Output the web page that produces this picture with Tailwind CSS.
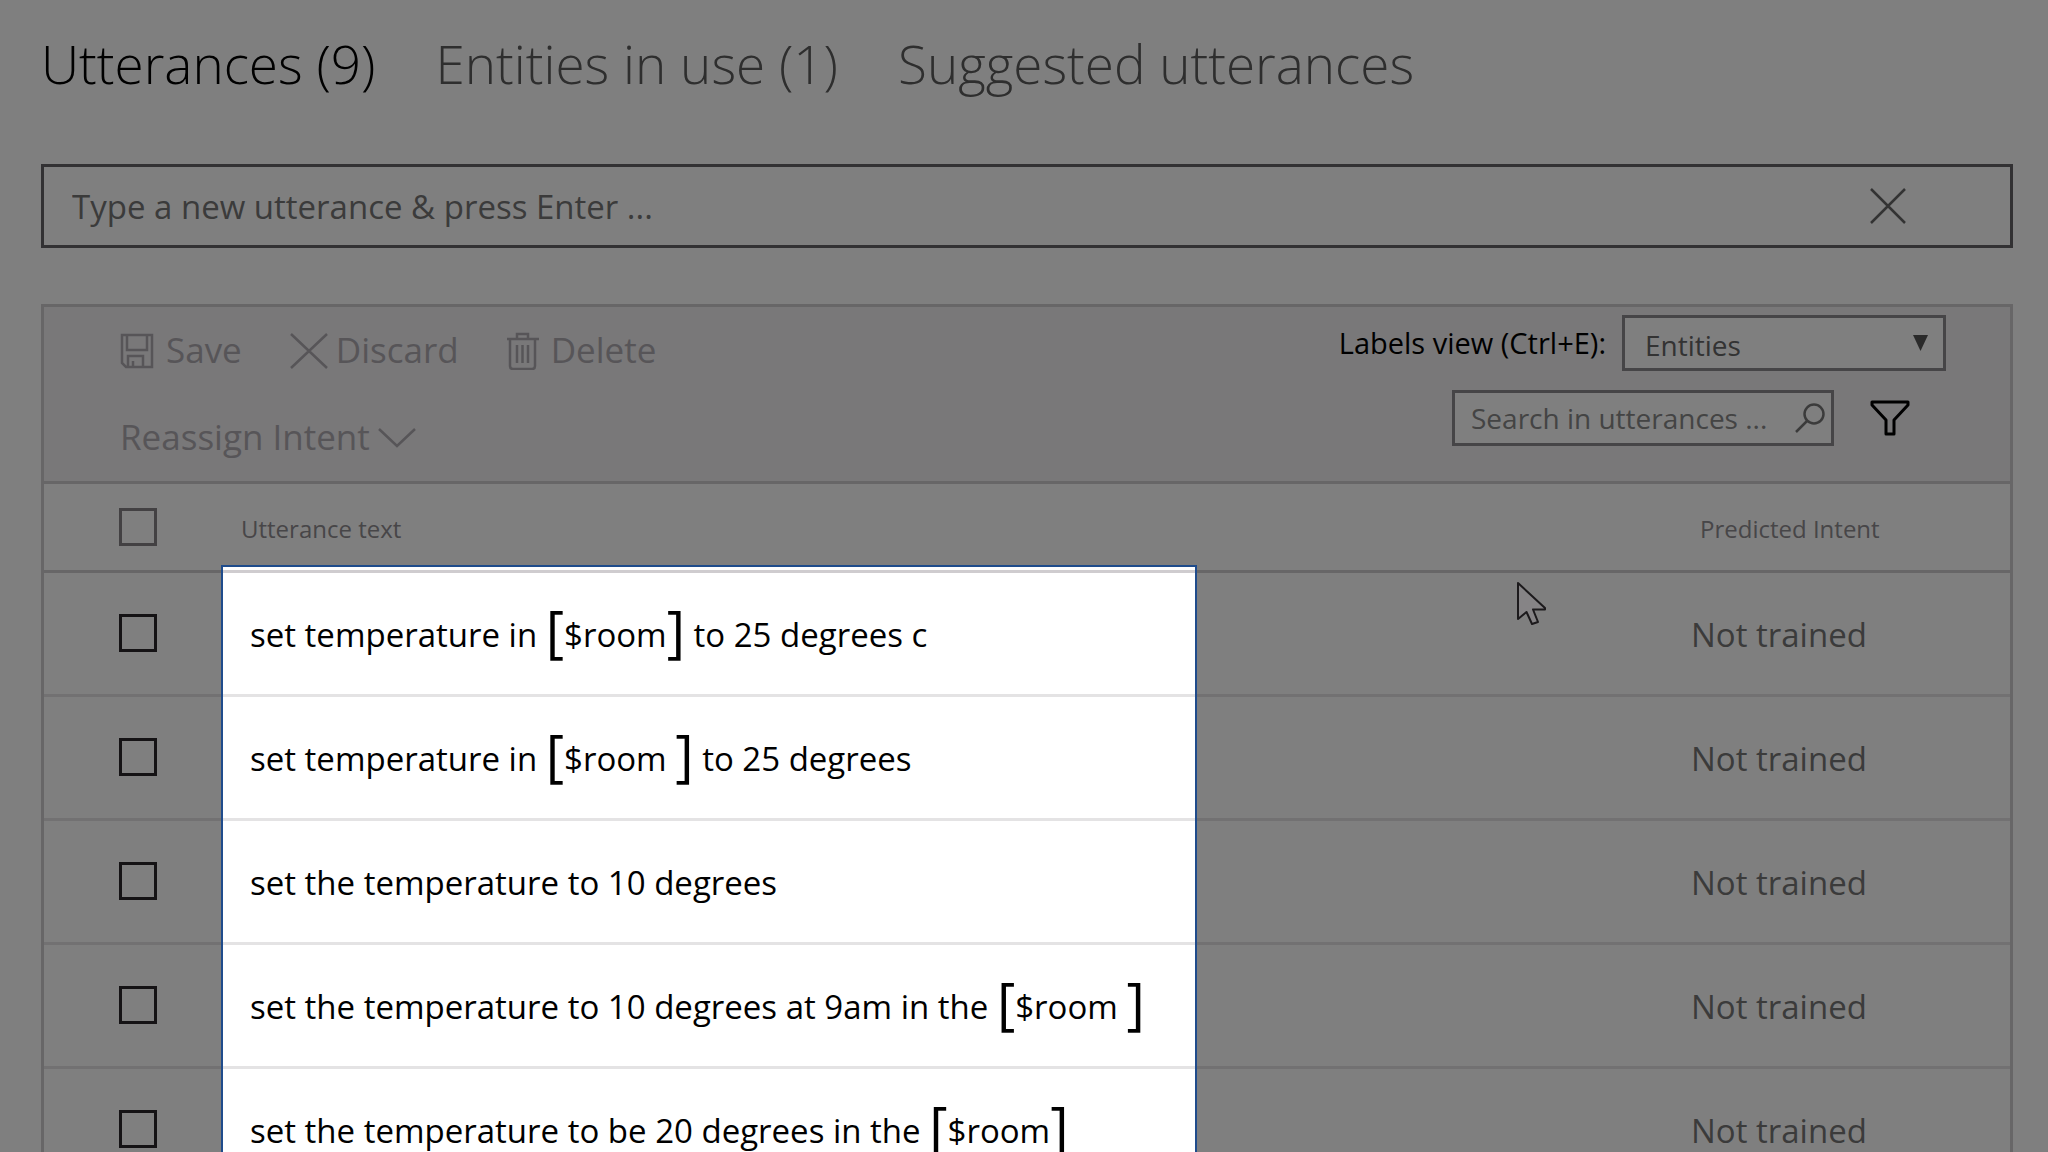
<!DOCTYPE html>
<html lang="en">
<head>
  <meta charset="UTF-8" />
  <meta name="viewport" content="width=device-width, initial-scale=1" />
  <title>Utterances</title>
  <script src="https://cdn.jsdelivr.net/npm/@tailwindcss/browser@4"></script>
</head>
<body class="bg-white font-['Open_Sans','Noto_Sans',sans-serif] text-black">

  <main class="relative h-screen overflow-hidden pl-[41px] pr-[35px] pt-6">

    <!-- Tabs -->
    <nav class="flex gap-15 text-[53px] font-light leading-[80px] text-[#5c5c5c]">
      <a href="#utterances" class="text-black">Utterances (9)</a>
      <a href="#entities">Entities in use (1)</a>
      <a href="#suggested">Suggested utterances</a>
    </nav>

    <!-- New utterance -->
    <div class="mt-15 flex h-[84px] items-center border-3 border-[#646266] pl-7 pr-26">
      <input type="text" aria-label="New utterance" placeholder="Type a new utterance &amp; press Enter ..." class="h-full flex-1 text-[33px] placeholder:text-[#777] outline-none" />
      <button type="button" aria-label="Clear">
        <svg class="size-9" viewBox="0 0 36 36" fill="none" stroke="#666" stroke-width="2.5"><path d="M1 1 35 35M35 1 1 35" /></svg>
      </button>
    </div>

    <section class="relative mt-14 border-x-3 border-t-3 border-[#cfcccf]">

      <!-- Toolbar -->
      <div class="flex justify-between border-b-3 border-[#cfcccf] bg-[#f2f0f3] pl-[76px] pr-16">
        <div class="text-[35px] text-[#aeabb0]">
          <div class="flex h-[87px] items-center gap-12">
            <button type="button" class="flex items-center gap-3">
              <svg class="h-9 w-[34px]" viewBox="0 0 34 36" fill="none" stroke="currentColor" stroke-width="2.5">
                <path d="M2 2H32V34H6L2 30ZM7 2V17H27V2M8 34V23H23V34M13 28V34" />
              </svg>
              Save
            </button>
            <button type="button" class="flex items-center gap-2">
              <svg class="h-9 w-[38px]" viewBox="0 0 38 36" fill="none" stroke="currentColor" stroke-width="2.5"><path d="M1 1 37 35M37 1 1 35" /></svg>
              Discard
            </button>
            <button type="button" class="flex items-center gap-3">
              <svg class="h-[38px] w-8" viewBox="0 0 32 38" fill="none" stroke="currentColor" stroke-width="2.5">
                <path d="M0 7H32M10 7V2H21V7M3 7V34Q3 37 6 37H25Q28 37 28 34V7M10 13V31M15.5 13V31M21 13V31" />
              </svg>
              Delete
            </button>
          </div>
          <button type="button" class="flex h-[87px] items-center gap-2">
            Reassign Intent
            <svg class="h-5 w-[38px]" viewBox="0 0 38 20" fill="none" stroke="currentColor" stroke-width="2.5"><path d="M1 1 19 18 37 1" /></svg>
          </button>
        </div>

        <div class="flex flex-col items-end gap-[19px] pt-2 text-[28px]">
          <div class="flex items-center gap-4">
            <label for="labelsView" class="text-[29px]">Labels view (Ctrl+E):</label>
            <div class="relative">
              <select id="labelsView" class="h-14 w-81 appearance-none border-3 border-[#8c8a8e] bg-white px-5 pt-1 text-[#666]">
                <option>Entities</option>
              </select>
              <svg class="pointer-events-none absolute right-[18px] top-5 h-4 w-[15px]" viewBox="0 0 15 16" fill="#555"><path d="M0 0H15L7.5 16Z" /></svg>
            </div>
          </div>
          <div class="mr-9 flex items-center gap-9">
            <div class="relative">
              <input type="text" aria-label="Search in utterances" placeholder="Search in utterances ..." class="h-14 w-[382px] border-3 border-[#8c8a8e] bg-white pl-4 pr-11 placeholder:text-[#888] outline-none" />
              <svg class="pointer-events-none absolute right-2 top-3 size-8" viewBox="0 0 32 32" fill="none" stroke="#777" stroke-width="2.5">
                <circle cx="20" cy="12" r="9.5" /><path d="M13 19 2 30" />
              </svg>
            </div>
            <button type="button" aria-label="Filter">
              <svg class="h-9 w-10" viewBox="0 0 40 36" fill="none" stroke="#000" stroke-width="3" stroke-linejoin="round">
                <path d="M2 2H38V5L24 20V34H16V20L2 5Z" />
              </svg>
            </button>
          </div>
        </div>
      </div>

      <!-- Utterances -->
      <table class="w-full text-left text-[33px]">
        <thead>
          <tr class="h-[87px] border-b-3 border-[#cfcccf] text-[24px] text-[#8f8c90]">
            <th class="w-[177px] pl-[75px]"><input type="checkbox" aria-label="Select all" class="block size-[38px] appearance-none border-3 border-[#868286]" /></th>
            <th class="pl-5 pt-1 font-normal">Utterance text</th>
            <th class="w-[360px] pl-[50px] pt-1 font-normal">Predicted Intent</th>
          </tr>
        </thead>
        <tbody>
          <tr class="h-[124px] border-b-3 border-[#e4e3e4]">
            <td class="pl-[75px]"><input type="checkbox" aria-label="Select utterance 1" class="block size-[38px] appearance-none border-3 border-[#2a262a]" /></td>
            <td class="pl-[29px] pt-1">set temperature in <span class="align-[-5px] text-[56px] leading-[0]">[</span>$room<span class="align-[-5px] text-[56px] leading-[0]">]</span> to 25 degrees c</td>
            <td class="pl-[41px] pt-1 text-[#777]">Not trained</td>
          </tr>
          <tr class="h-[124px] border-b-3 border-[#e4e3e4]">
            <td class="pl-[75px]"><input type="checkbox" aria-label="Select utterance 2" class="block size-[38px] appearance-none border-3 border-[#2a262a]" /></td>
            <td class="pl-[29px] pt-1">set temperature in <span class="align-[-5px] text-[56px] leading-[0]">[</span>$room <span class="align-[-5px] text-[56px] leading-[0]">]</span> to 25 degrees</td>
            <td class="pl-[41px] pt-1 text-[#777]">Not trained</td>
          </tr>
          <tr class="h-[124px] border-b-3 border-[#e4e3e4]">
            <td class="pl-[75px]"><input type="checkbox" aria-label="Select utterance 3" class="block size-[38px] appearance-none border-3 border-[#2a262a]" /></td>
            <td class="pl-[29px] pt-1">set the temperature to 10 degrees</td>
            <td class="pl-[41px] pt-1 text-[#777]">Not trained</td>
          </tr>
          <tr class="h-[124px] border-b-3 border-[#e4e3e4]">
            <td class="pl-[75px]"><input type="checkbox" aria-label="Select utterance 4" class="block size-[38px] appearance-none border-3 border-[#2a262a]" /></td>
            <td class="pl-[29px] pt-1">set the temperature to 10 degrees at 9am in the <span class="align-[-5px] text-[56px] leading-[0]">[</span>$room <span class="align-[-5px] text-[56px] leading-[0]">]</span></td>
            <td class="pl-[41px] pt-1 text-[#777]">Not trained</td>
          </tr>
          <tr class="h-[124px] border-b-3 border-[#e4e3e4]">
            <td class="pl-[75px]"><input type="checkbox" aria-label="Select utterance 5" class="block size-[38px] appearance-none border-3 border-[#2a262a]" /></td>
            <td class="pl-[29px] pt-1">set the temperature to be 20 degrees in the <span class="align-[-5px] text-[56px] leading-[0]">[</span>$room<span class="align-[-5px] text-[56px] leading-[0]">]</span></td>
            <td class="pl-[41px] pt-1 text-[#777]">Not trained</td>
          </tr>
        </tbody>
      </table>

      <!-- Spotlight: its shadow dims everything outside the box -->
      <div class="pointer-events-none absolute bottom-0 left-[177px] top-[258px] w-[976px] border-2 border-[#1f4c8c] shadow-[0_0_0_3000px_rgb(0_0_0/0.5)]"></div>
    </section>

    <!-- Mouse pointer -->
    <svg class="absolute left-[1516px] top-[581px] h-[46px] w-[31px]" viewBox="0 0 31 46" fill="#868486" stroke="#1c1a1c" stroke-width="2" stroke-linejoin="round">
      <path d="M2 2V38L10.5 31 16 43 22 41 17 28.5H29V27Z" />
    </svg>
  </main>

</body>
</html>
